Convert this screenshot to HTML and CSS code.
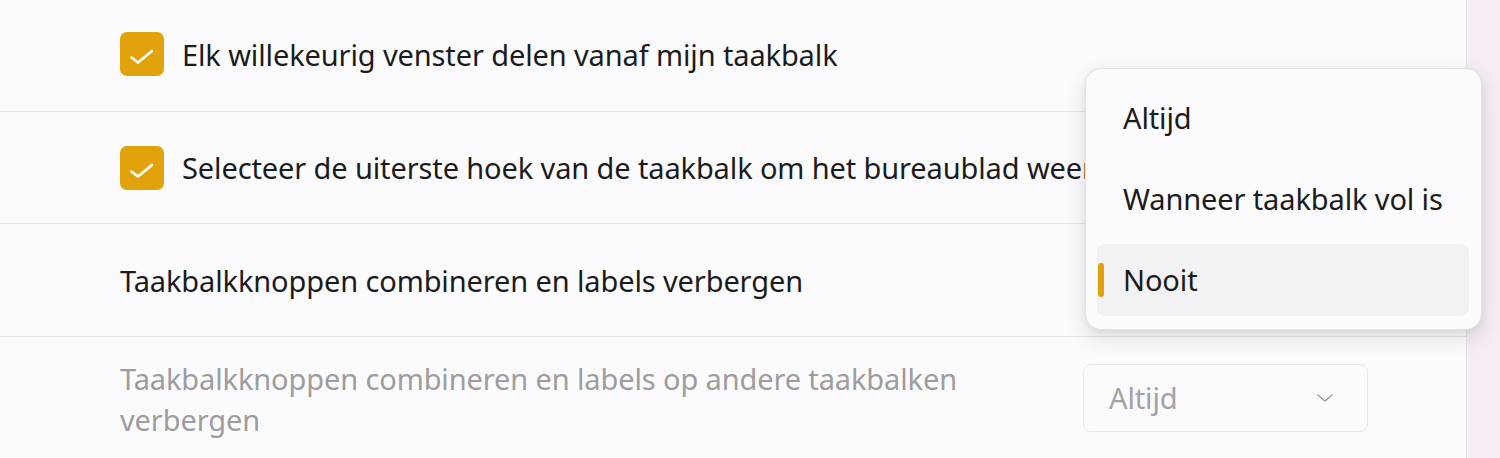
FILE: index.html
```html
<!DOCTYPE html>
<html lang="nl">
<head>
<meta charset="utf-8">
<title>Taakbalkgedrag</title>
<link rel="stylesheet" href="styles.css">
</head>
<body>
<div class="window">
  <main class="panel">
    <div class="row first">
      <span class="check"><svg viewBox="0 0 44 44"><path d="M11.5 25.5 L18 30.5 L32 19"/></svg></span>
      <span class="label">Elk willekeurig venster delen vanaf mijn taakbalk</span>
    </div>
    <div class="row">
      <span class="check"><svg viewBox="0 0 44 44"><path d="M11.5 25.5 L18 30.5 L32 19"/></svg></span>
      <span class="label">Selecteer de uiterste hoek van de taakbalk om het bureaublad weer te geven</span>
    </div>
    <div class="row setting">
      <span class="label">Taakbalkknoppen combineren en labels verbergen</span>
    </div>
    <div class="row setting disabled">
      <span class="label wrap">Taakbalkknoppen combineren en labels op andere taakbalken verbergen</span>
      <div class="combo">
        <span>Altijd</span>
        <svg class="chev" viewBox="0 0 20 12"><path d="M3 3 L10 9 L17 3"/></svg>
      </div>
    </div>
  </main>
  <aside class="edge"></aside>

  <ul class="flyout">
    <li class="item">Altijd</li>
    <li class="item">Wanneer taakbalk vol is</li>
    <li class="item selected">Nooit</li>
  </ul>
</div>
</body>
</html>
```

FILE: styles.css
```css
* { box-sizing: border-box; }

html, body {
  margin: 0;
  padding: 0;
  height: 100%;
  overflow: hidden;
}

body {
  font-family: "Noto Sans", "Open Sans", sans-serif;
  font-size: 29px;
  letter-spacing: -0.12px;
  color: #1b1b1b;
  background: #f5edf3;
}

.window {
  position: relative;
  display: flex;
  height: 458px;
}

.panel {
  width: 1467px;
  background: #fbfbfd;
  border-right: 1px solid #e6e3e7;
  display: flex;
  flex-direction: column;
}

.edge {
  flex: 1;
  background: #f5edf3;
}

.row {
  display: flex;
  align-items: center;
  gap: 18px;
  height: 112px;
  padding-left: 120px;
  border-bottom: 1px solid #e5e5e7;
  flex-shrink: 0;
  white-space: nowrap;
  overflow: hidden;
}

.row.first {
  padding-bottom: 3px;
}

.row.setting {
  justify-content: space-between;
  padding-right: 98px;
  height: 113px;
}

.row.disabled {
  border-bottom: none;
  height: 121px;
  color: #9d9d9d;
  white-space: normal;
}

.label.wrap {
  max-width: 900px;
  line-height: 41px;
  padding-top: 2px;
}

.check {
  width: 44px;
  height: 44px;
  border-radius: 7px;
  background: #e1a20c;
  flex-shrink: 0;
  display: flex;
}

.check svg {
  width: 44px;
  height: 44px;
  fill: none;
  stroke: #fff;
  stroke-width: 2.6;
  stroke-linecap: round;
  stroke-linejoin: round;
}

.combo {
  width: 285px;
  height: 68px;
  border: 1px solid #e9e8eb;
  border-radius: 8px;
  background: #fbfafc;
  display: flex;
  align-items: center;
  justify-content: space-between;
  padding: 0 32px 0 25px;
  flex-shrink: 0;
}

.disabled .combo {
  color: #a3a3a3;
}

.chev {
  width: 20px;
  height: 12px;
  fill: none;
  stroke: #9d9d9d;
  stroke-width: 1.6;
  stroke-linecap: round;
  stroke-linejoin: round;
}

/* Open dropdown list floating above the settings */
.flyout {
  position: absolute;
  left: 1085px;
  top: 68px;
  width: 397px;
  height: 262px;
  margin: 0;
  padding: 14px 12px 13px 11px;
  list-style: none;
  background: #fbfafc;
  border: 1px solid #e4e2e6;
  border-radius: 16px;
  box-shadow: 0 8px 22px rgba(0, 0, 0, 0.12), 0 2px 6px rgba(0, 0, 0, 0.06);
  display: flex;
  flex-direction: column;
  gap: 9px;
}

.item {
  position: relative;
  height: 72px;
  display: flex;
  align-items: center;
  padding-left: 26px;
  padding-bottom: 2px;
  border-radius: 8px;
  white-space: nowrap;
}

.item.selected {
  background: #f2f1f4;
}

.item.selected::before {
  content: "";
  position: absolute;
  left: 1px;
  top: 19px;
  width: 6px;
  height: 34px;
  border-radius: 3px;
  background: #e1a20c;
}
```
